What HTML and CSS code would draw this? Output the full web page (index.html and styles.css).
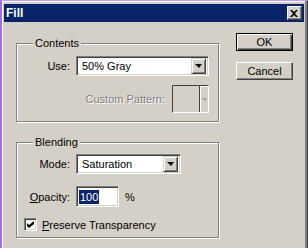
FILE: index.html
```html
<!DOCTYPE html>
<html lang="en">
<head>
  <meta charset="UTF-8" />
  <title>Fill</title>
  <link rel="stylesheet" href="styles.css">
</head>
<body>
  <div class="window">
    <div class="titlebar">
      <span class="title">Fill</span>
      <span class="close-btn">
        <svg width="8" height="7" viewBox="0 0 8 7"><path d="M0 0h2l2 2 2-2h2L5 3.5 8 7H6L4 5 2 7H0l3-3.5z" fill="#000"/></svg>
      </span>
    </div>

    <div class="dialog">
      <div class="groups">
        <fieldset class="group contents">
          <legend>Contents</legend>
          <div class="row">
            <span class="label">Use:</span>
            <div class="select use-select">
              <span class="value">50% Gray</span>
              <span class="drop-btn"><span class="tri"></span></span>
            </div>
          </div>
          <div class="row pattern-row">
            <span class="label disabled">Custom Pattern:</span>
            <div class="swatch">
              <span class="swatch-box"></span>
              <span class="swatch-arrow"><span class="tri gray"></span></span>
            </div>
          </div>
        </fieldset>

        <fieldset class="group blending">
          <legend>Blending</legend>
          <div class="row">
            <span class="label">Mode:</span>
            <div class="select mode-select">
              <span class="value">Saturation</span>
              <span class="drop-btn"><span class="tri"></span></span>
            </div>
          </div>
          <div class="row opacity-row">
            <span class="label"><u>O</u>pacity:</span>
            <div class="textbox"><span class="selected">100</span></div>
            <span class="unit">%</span>
          </div>
          <div class="row check-row">
            <span class="checkbox">
              <svg width="7" height="7" viewBox="0 0 7 7"><path d="M0 2L2 4L7 0V3L2 7L0 5Z" fill="#000"/></svg>
            </span>
            <span class="check-label"><u>P</u>reserve Transparency</span>
          </div>
        </fieldset>
      </div>

      <div class="buttons">
        <div class="btn default">OK</div>
        <div class="btn">Cancel</div>
      </div>
    </div>
  </div>
</body>
</html>
```

FILE: styles.css
```css
body {
  margin: 0;
  font-family: "Liberation Sans", Arial, sans-serif;
  font-size: 11px;
  color: #000;
  background: #d4d0c8;
}
.window {
  box-sizing: border-box;
  width: 308px;
  height: 248px;
  background: #d4d0c8;
  border-left: 2px solid #a070e0;
  border-top: 1px solid #c0a0e8;
  border-right: 1px solid #404040;
  box-shadow: inset -2px 0 0 #808080, inset 1px 1px 0 #fff;
  padding: 3px 3px 0 2px;
}
.titlebar {
  height: 18px;
  background: #0a246a;
  display: flex;
  align-items: center;
  justify-content: space-between;
  padding: 0 2px 0 2px;
}
.title {
  color: #fff;
  font-weight: bold;
  font-size: 12px;
  line-height: 18px;
}
.close-btn {
  box-sizing: border-box;
  width: 15px;
  height: 14px;
  background: #d4d0c8;
  border: 1px solid;
  border-color: #fff #404040 #404040 #fff;
  box-shadow: inset -1px -1px 0 #808080;
  display: flex;
  align-items: center;
  justify-content: center;
  padding-right: 1px;
}
.dialog {
  display: flex;
  align-items: flex-start;
  padding: 11px 0 0 12px;
  gap: 17px;
}
.groups {
  width: 203px;
  margin-top: 4px;
}
.group {
  margin: 0;
  padding: 0 9px 0 3px;
  border: 1px solid #808080;
  box-shadow: 1px 1px 0 #fff, inset 1px 1px 0 #fff;
}
.group legend {
  margin-left: 13px;
  padding: 0 2px;
  line-height: 13px;
  background: #d4d0c8;
}
.contents {
  padding-top: 6px;
  padding-bottom: 8px;
}
.blending {
  margin-top: 14px;
  padding-top: 5px;
  padding-bottom: 6px;
}
.row {
  display: flex;
  align-items: center;
  gap: 6px;
}
.label {
  width: 50px;
  flex: none;
  text-align: right;
}
.disabled {
  color: #808080;
  text-shadow: 1px 1px 0 #fff;
}
.select {
  box-sizing: border-box;
  height: 20px;
  background: #fff;
  border: 1px solid;
  border-color: #808080 #fff #fff #808080;
  box-shadow: inset 1px 1px 0 #404040, inset -1px -1px 0 #d4d0c8;
  display: flex;
  align-items: center;
  padding: 2px;
}
.use-select {
  width: 133px;
}
.mode-select {
  width: 105px;
}
.value {
  flex: 1;
  padding-left: 3px;
}
.drop-btn {
  box-sizing: border-box;
  width: 15px;
  height: 16px;
  background: #d4d0c8;
  border: 1px solid;
  border-color: #d4d0c8 #404040 #404040 #d4d0c8;
  box-shadow: inset 1px 1px 0 #fff, inset -1px -1px 0 #808080;
  display: flex;
  align-items: center;
  justify-content: center;
}
.tri {
  width: 0;
  height: 0;
  border-left: 4px solid transparent;
  border-right: 3px solid transparent;
  border-top: 4px solid #000;
}
.tri.gray {
  border-top-color: #a0a0a0;
  border-left-width: 3px;
  border-right-width: 2px;
  border-top-width: 3px;
}
.pattern-row {
  margin-top: 9px;
  justify-content: flex-end;
  gap: 7px;
}
.pattern-row .label {
  width: auto;
}
.swatch {
  box-sizing: border-box;
  width: 37px;
  height: 28px;
  display: flex;
  border: 1px solid;
  border-color: #404040 #fff #fff #404040;
}
.swatch-box {
  flex: 1;
  background: #d4d0c8;
  border-right: 1px solid #404040;
}
.swatch-arrow {
  width: 8px;
  background: #d4d0c8;
  box-shadow: inset 1px 1px 0 #fff;
  display: flex;
  align-items: center;
  justify-content: center;
}
.opacity-row {
  margin-top: 12px;
}
.textbox {
  box-sizing: border-box;
  width: 43px;
  height: 21px;
  background: #fff;
  border: 1px solid;
  border-color: #808080 #fff #fff #808080;
  box-shadow: inset 1px 1px 0 #404040, inset -1px -1px 0 #d4d0c8;
  display: flex;
  align-items: center;
  padding-left: 2px;
}
.selected {
  background: #0a246a;
  color: #fff;
  line-height: 14px;
  padding: 0 1px;
}
.check-row {
  margin-top: 11px;
  gap: 5px;
  padding-left: 4px;
}
.checkbox {
  box-sizing: border-box;
  width: 13px;
  height: 13px;
  background: #fff;
  border: 1px solid;
  border-color: #808080 #fff #fff #808080;
  box-shadow: inset 1px 1px 0 #404040, inset -1px -1px 0 #d4d0c8;
  display: flex;
  align-items: center;
  justify-content: center;
}
.buttons {
  display: flex;
  flex-direction: column;
  gap: 11px;
}
.btn {
  box-sizing: border-box;
  width: 57px;
  height: 18px;
  background: #d4d0c8;
  border: 1px solid;
  border-color: #fff #404040 #404040 #fff;
  box-shadow: inset -1px -1px 0 #808080;
  text-align: center;
  line-height: 16px;
}
.btn.default {
  border-color: #000;
  box-shadow: inset 1px 1px 0 #fff, inset -1px -1px 0 #404040, inset -2px -2px 0 #808080;
}
```
